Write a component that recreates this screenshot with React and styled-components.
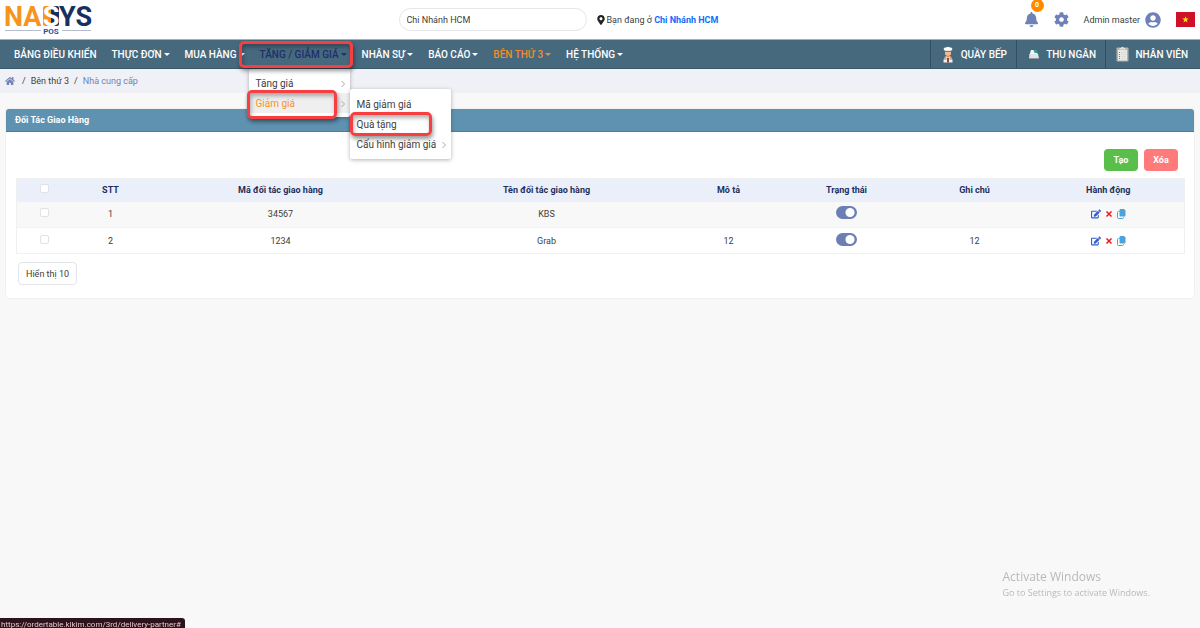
import React from "react";
import styled, { createGlobalStyle, css } from "styled-components";
import { FaMapMarkerAlt, FaBell, FaCog, FaUserCircle, FaHome, FaEdit } from "react-icons/fa";

const GlobalStyle = createGlobalStyle`
  * { box-sizing: border-box; }
  body {
    margin: 0;
    background: #f8f8f8;
    color: #404040;
    font: 9px/14px Roboto, "Liberation Sans", sans-serif;
  }
  button, input { font: inherit; color: inherit; }
  a { color: inherit; text-decoration: none; }
  ul, ol { list-style: none; margin: 0; padding: 0; }
`;

const Page = styled.div`
  min-height: 100vh;
`;

const Header = styled.header`
  display: grid;
  grid-template-columns: 1fr 2fr 1fr;
  align-items: center;
  height: 39px;
  padding: 0 5px;
  background: #fff;
`;

const Logo = styled.a`
  display: block;
  height: 36px;
  svg { display: block; overflow: visible; }
`;

const Branch = styled.div`
  display: flex;
  align-items: center;
  gap: 9px;
  height: 36px;
  padding-left: 96px;
`;

const BranchInput = styled.input`
  width: 188px;
  height: 23px;
  padding: 0 7px;
  border: 1px solid #e4e6ea;
  border-radius: 12px;
  background: #fff;
  outline: none;
`;

const Location = styled.div`
  display: flex;
  align-items: center;
  gap: 1px;
  white-space: nowrap;
  svg { color: #222; font-size: 10px; }
  b { color: #0d6efd; }
`;

const UserArea = styled.div`
  display: flex;
  align-items: center;
  justify-content: flex-end;
  height: 36px;
`;

const IconButton = styled.button`
  position: relative;
  display: flex;
  padding: 0;
  margin-right: 15px;
  border: 0;
  background: none;
  color: #6f82b8;
  font-size: 15px;
`;

const Badge = styled.span`
  position: absolute;
  top: -13px;
  left: 7px;
  width: 13px;
  height: 13px;
  border-radius: 50%;
  background: #ff8a00;
  color: #fff;
  font-size: 7px;
  font-weight: 700;
  line-height: 13px;
  text-align: center;
`;

const UserButton = styled.button`
  display: flex;
  align-items: center;
  gap: 5px;
  padding: 0;
  margin-right: 15px;
  border: 0;
  background: none;
  svg { color: #6f82b8; font-size: 16px; }
`;

const NavBar = styled.nav`
  display: flex;
  justify-content: space-between;
  height: 30px;
  padding-left: 14px;
  background: #47697e;
  border-top: 1px solid #9db1be;
  border-bottom: 1px solid #38586c;
  color: #fff;
  font-size: 10px;
  font-weight: 500;
`;

const Menu = styled.ul`
  display: flex;
  gap: 15px;
`;

const MenuItem = styled.li`
  position: relative;
  display: flex;
  align-items: center;
  padding-top: 2px;
  color: ${(p) => p.$color || "#fff"};
  white-space: nowrap;
`;

const Caret = styled.span`
  display: inline-block;
  margin-left: 2px;
  vertical-align: 2px;
  border: 3px solid transparent;
  border-top-color: currentColor;
  border-bottom: 0;
`;

const Stations = styled.div`
  display: flex;
`;

const Station = styled.a`
  display: flex;
  align-items: center;
  justify-content: space-between;
  width: ${(p) => p.$width}px;
  padding: 2px ${(p) => p.$end || 9}px 0 10px;
  border-left: 1px solid #304f61;
  white-space: nowrap;
  svg { margin-top: -2px; }
`;

const marked = css`
  &::after {
    content: "";
    position: absolute;
    inset: ${(p) => p.$mark};
    border: 3px solid #f73f42;
    border-radius: 5px;
    box-shadow: 1px 3px 4px rgba(0, 0, 0, 0.4), inset 1px 3px 4px rgba(0, 0, 0, 0.3);
    pointer-events: none;
    z-index: 3;
  }
`;

const MarkedMenuItem = styled(MenuItem)`
  ${marked}
`;

const Dropdown = styled.ul`
  position: absolute;
  z-index: 2;
  top: ${(p) => p.$top}px;
  left: ${(p) => p.$left}px;
  width: 101px;
  padding: ${(p) => p.$pad}px 0;
  border-radius: 2px;
  background: #fff;
  box-shadow: 0 1px 4px rgba(0, 0, 0, 0.3);
  color: #404040;
  font-weight: 400;
`;

const DropItem = styled.li`
  position: relative;
  display: flex;
  align-items: center;
  justify-content: space-between;
  height: 20px;
  padding: 2px 5px 0 7px;
  background: ${(p) => (p.$active ? "#efefef" : "none")};
  > a { color: ${(p) => (p.$active ? "#f7941d" : "inherit")}; }
  > svg { color: #aaa; }
  ${(p) => p.$mark && marked}
`;

const Crumbs = styled.ol`
  display: flex;
  align-items: center;
  gap: 5px;
  height: 24px;
  padding: 0 5px;
  background: #f0f1f6;
  svg { display: block; margin-right: 2px; color: #6f82b8; font-size: 10px; }
  li:last-child { color: #6f82b8; }
`;

const Panel = styled.main`
  margin: 15px 5px 0;
  border: 1px solid #f0f0f0;
  border-radius: 4px;
  background: #fff;
  overflow: hidden;
`;

const PanelTitle = styled.h1`
  margin: 0;
  padding: 0 9px;
  background: #5f92b1;
  border-bottom: 1px solid #4d7e9c;
  color: #fff;
  font-size: 9px;
  font-weight: 700;
  line-height: 22px;
`;

const PanelBody = styled.div`
  padding: 17px 10px 13px;
`;

const Actions = styled.div`
  display: flex;
  justify-content: flex-end;
  gap: 6px;
  padding: 0 6px 7px 0;
`;

const ActionButton = styled.button`
  width: 34px;
  height: 22px;
  padding: 0;
  border: 0;
  border-radius: 4px;
  background: ${(p) => p.$color};
  color: #fff;
  font-weight: 700;
`;

const Table = styled.table`
  width: 100%;
  table-layout: fixed;
  border-collapse: collapse;
  border: 1px solid #f0f0f0;
  text-align: center;
  th, td { padding: 0; }
  thead tr { height: 23px; background: #eaeff9; color: #1e2f5e; }
  tbody tr { height: 26px; border-bottom: 1px solid #f2f2f2; }
  tbody tr:nth-child(odd) { background: #f8f8f8; }
`;

const Check = styled.input`
  appearance: none;
  display: block;
  width: 9px;
  height: 9px;
  margin: -3px auto 0;
  border: 1px solid #dfe2e6;
  border-radius: 2px;
  background: #fff;
`;

const Toggle = styled.input`
  appearance: none;
  display: block;
  width: 21px;
  height: 13px;
  margin: -3px auto 0;
  border-radius: 7px;
  background: radial-gradient(circle at 14px 50%, #fff 0 4px, #6b7fb5 5px);
`;

const RowActions = styled.div`
  display: flex;
  align-items: center;
  justify-content: center;
  gap: 4px;
`;

const RowButton = styled.button`
  display: flex;
  padding: 0;
  border: 0;
  background: none;
  color: ${(p) => p.$color};
  font-size: 10px;
`;

const PageSize = styled.button`
  display: block;
  height: 23px;
  margin: 8px 0 0 2px;
  padding: 0 7px;
  border: 1px solid #e2e5e9;
  border-radius: 4px;
  background: #fff;
`;

const Activation = styled.aside`
  position: fixed;
  right: 50px;
  bottom: 28px;
  color: #b9b9b9;
  font: 9px/15px "Open Sans", sans-serif;
  strong { display: block; font-size: 12px; font-weight: 400; line-height: 16px; }
`;

const StatusLink = styled.div`
  position: fixed;
  left: 0;
  bottom: 0;
  height: 10px;
  padding: 0 4px 0 1px;
  border-radius: 0 3px 0 0;
  background: #2b151b;
  color: #e6c3cd;
  font-size: 8px;
  line-height: 13px;
`;

function LogoMark() {
  return (
    <svg width="88" height="34" viewBox="0 0 88 34" role="img" aria-label="NASYS POS">
      <path d="M40 4h6v20h-6q-2 0-2-2V6q0-2 2-2z" fill="#f7941d" />
      <path d="M46 4h6q2 0 2 2v16q0 2-2 2h-6z" fill="#16305f" />
      <g fontFamily="Roboto, sans-serif" fontWeight="700" fontSize="27">
        <text x="-1" y="24" fill="#f7941d">NA</text>
        <text x="46" y="24" textAnchor="middle" fill="#fff">S</text>
        <text x="54" y="24" fill="#16305f">YS</text>
      </g>
      <path d="M0 28.500h36M57 28.500h29" stroke="#b5bccb" />
      <text x="46" y="32" textAnchor="middle" fontFamily="Roboto, sans-serif" fontWeight="700" fontSize="8" fill="#2d4f9b">POS</text>
    </svg>
  );
}

function Chevron() {
  return (
    <svg width="4" height="8" viewBox="0 0 4 8" fill="none" stroke="currentColor" aria-hidden="true">
      <path d="M.5 1 3.500 4 .5 7" />
    </svg>
  );
}

function Chef() {
  return (
    <svg width="14" height="17" viewBox="0 0 14 17" aria-hidden="true">
      <path d="M4 5 2.500 3Q3 1 6 1.200 7 .5 8 1.200q3-.2 3.500 1.800L10 5z" fill="#fff" />
      <path d="M4 5h6v3.500L7 10.500 4 8.500z" fill="#e9bd91" />
      <path d="M4 4.800h6v1H4z" fill="#8a5f3d" />
      <path d="m3 12 2-2.500h4l2 2.500v1.500H3z" fill="#c9a58c" />
      <path d="M5 10h4v4.500H5z" fill="#e3c7a8" />
      <path d="m5.500 10 1.500 1 1.500-1z" fill="#d85c50" />
      <path d="M2.500 13.500h9v3h-9z" fill="#f4efec" />
      <path d="M6 12h2v4.500H6z" fill="#8f4a45" />
    </svg>
  );
}

function Register() {
  return (
    <svg width="14" height="12" viewBox="0 0 14 12" aria-hidden="true">
      <path d="M4 2h5l2 5H2.500z" fill="#f1f5f7" />
      <path d="M6.500 2h3l1.200 3H7.500z" fill="#2e9e94" />
      <path d="M2.500 6h8.500l1 4.500H2z" fill="#dfe4e7" />
      <path d="M2 10h10v1H2z" fill="#8d989e" />
    </svg>
  );
}

function Clipboard() {
  return (
    <svg width="13" height="16" viewBox="0 0 13 16" aria-hidden="true">
      <rect x=".5" y="1.500" width="12" height="14" rx="1" fill="#b3b3ad" />
      <path d="M2 4h9v10.500H2z" fill="#e8e8e4" />
      <path d="M3.500 3.500V2H5Q6.500-.5 8 2h1.500v1.500z" fill="#e0e0dc" />
      <path d="M5 6.500h5M5 8.500h5M5 10.500h5M5 12.500h5" stroke="#d3d6d4" strokeWidth=".6" />
      <path d="M3 6.500h1M3 8.500h1M3 12.500h1" stroke="#5aa469" />
      <path d="M3 10.500h1" stroke="#d3564d" />
    </svg>
  );
}

function Flag() {
  return (
    <svg width="19" height="15" viewBox="0 0 19 15" role="img" aria-label="Tiếng Việt">
      <path fill="#ce1126" d="M0 0h19v15H0z" />
      <path fill="#ffe600" d="m9.500 4.300.8 2.300h2.400l-1.900 1.500.7 2.400-2-1.400-2 1.400.7-2.400-1.900-1.500h2.400z" />
    </svg>
  );
}

function Cross() {
  return (
    <svg width="8" height="8" viewBox="0 0 8 8" stroke="currentColor" strokeWidth="1.500" aria-hidden="true">
      <path d="m1.500 1.500 5 5m0-5-5 5" />
    </svg>
  );
}

function Copy() {
  return (
    <svg width="9" height="10" viewBox="0 0 9 10" aria-hidden="true">
      <path d="M3.500 0H7l1.500 1.500V6.500a1 1 0 0 1-1 1h-4a1 1 0 0 1-1-1V1a1 1 0 0 1 1-1z" fill="#4ba3da" />
      <path d="M2.500 2.500h-1a1 1 0 0 0-1 1V8.500a1 1 0 0 0 1 1h4a1 1 0 0 0 1-1V8" fill="none" stroke="#4ba3da" />
    </svg>
  );
}

const columns = [
  { label: "STT", width: 76 },
  { label: "Mã đối tác giao hàng", width: 264 },
  { label: "Tên đối tác giao hàng", width: 268 },
  { label: "Mô tả", width: 96 },
  { label: "Trạng thái", width: 140 },
  { label: "Ghi chú", width: 116 },
  { label: "Hành động", width: 152 },
];

const partners = [
  { code: "34567", name: "KBS", description: "", note: "" },
  { code: "1234", name: "Grab", description: "12", note: "12" },
];

function NavLink({ children }) {
  return (
    <a href="#">
      {children}
      <Caret />
    </a>
  );
}

export default function App() {
  return (
    <Page>
      <GlobalStyle />
      <Header>
        <Logo href="#"><LogoMark /></Logo>
        <Branch>
          <BranchInput aria-label="Chi nhánh" defaultValue="Chi Nhánh HCM" />
          <Location>
            <FaMapMarkerAlt />
            <span>Bạn đang ở <b>Chi Nhánh HCM</b></span>
          </Location>
        </Branch>
        <UserArea>
          <IconButton aria-label="Thông báo"><FaBell /><Badge>0</Badge></IconButton>
          <IconButton aria-label="Cài đặt"><FaCog /></IconButton>
          <UserButton>Admin master <FaUserCircle /></UserButton>
          <Flag />
        </UserArea>
      </Header>

      <NavBar>
        <Menu>
          <MenuItem><a href="#">BẢNG ĐIỀU KHIỂN</a></MenuItem>
          <MenuItem><NavLink>THỰC ĐƠN</NavLink></MenuItem>
          <MenuItem><NavLink>MUA HÀNG</NavLink></MenuItem>
          <MarkedMenuItem $color="#1e2f6b" $mark="1px -6px 0 -21px">
            <NavLink>TĂNG / GIẢM GIÁ</NavLink>
            <Dropdown $top={29} $left={-11} $pad={4}>
              <DropItem><a href="#">Tăng giá</a><Chevron /></DropItem>
              <DropItem $active $mark="-3px 13px -6px -2px">
                <a href="#">Giảm giá</a><Chevron />
                <Dropdown $top={-4} $left={101} $pad={5}>
                  <DropItem><a href="#">Mã giảm giá</a></DropItem>
                  <DropItem $mark="-2px 19px -2px 0"><a href="#">Quà tặng</a></DropItem>
                  <DropItem><a href="#">Cấu hình giảm giá</a><Chevron /></DropItem>
                </Dropdown>
              </DropItem>
            </Dropdown>
          </MarkedMenuItem>
          <MenuItem><NavLink>NHÂN SỰ</NavLink></MenuItem>
          <MenuItem><NavLink>BÁO CÁO</NavLink></MenuItem>
          <MenuItem $color="#f28c28"><NavLink>BÊN THỨ 3</NavLink></MenuItem>
          <MenuItem><NavLink>HỆ THỐNG</NavLink></MenuItem>
        </Menu>
        <Stations>
          <Station href="#" $width={86}><Chef />QUẦY BẾP</Station>
          <Station href="#" $width={89}><Register />THU NGÂN</Station>
          <Station href="#" $width={95} $end={12}><Clipboard />NHÂN VIÊN</Station>
        </Stations>
      </NavBar>

      <Crumbs>
        <li><a href="#" aria-label="Trang chủ"><FaHome /></a></li>
        <li>/</li>
        <li><a href="#">Bên thứ 3</a></li>
        <li>/</li>
        <li><a href="#">Nhà cung cấp</a></li>
      </Crumbs>

      <Panel>
        <PanelTitle>Đối Tác Giao Hàng</PanelTitle>
        <PanelBody>
          <Actions>
            <ActionButton $color="#5abf4a">Tạo</ActionButton>
            <ActionButton $color="#ff7b7b">Xóa</ActionButton>
          </Actions>
          <Table>
            <colgroup>
              <col width="56" />
              {columns.map((c) => <col key={c.label} width={c.width} />)}
            </colgroup>
            <thead>
              <tr>
                <th><Check type="checkbox" aria-label="Chọn tất cả" /></th>
                {columns.map((c) => <th key={c.label}>{c.label}</th>)}
              </tr>
            </thead>
            <tbody>
              {partners.map((p, i) => (
                <tr key={p.code}>
                  <td><Check type="checkbox" aria-label={`Chọn ${p.name}`} /></td>
                  <td>{i + 1}</td>
                  <td>{p.code}</td>
                  <td>{p.name}</td>
                  <td>{p.description}</td>
                  <td><Toggle type="checkbox" role="switch" defaultChecked aria-label={`Trạng thái ${p.name}`} /></td>
                  <td>{p.note}</td>
                  <td>
                    <RowActions>
                      <RowButton $color="#2f5fd0" aria-label="Sửa"><FaEdit /></RowButton>
                      <RowButton $color="#f01818" aria-label="Xóa"><Cross /></RowButton>
                      <RowButton $color="#4ba3da" aria-label="Sao chép"><Copy /></RowButton>
                    </RowActions>
                  </td>
                </tr>
              ))}
            </tbody>
          </Table>
          <PageSize>Hiển thị 10</PageSize>
        </PanelBody>
      </Panel>

      <Activation>
        <strong>Activate Windows</strong>
        Go to Settings to activate Windows.
      </Activation>
      <StatusLink>https://ordertable.klkim.com/3rd/delivery-partner#</StatusLink>
    </Page>
  );
}
